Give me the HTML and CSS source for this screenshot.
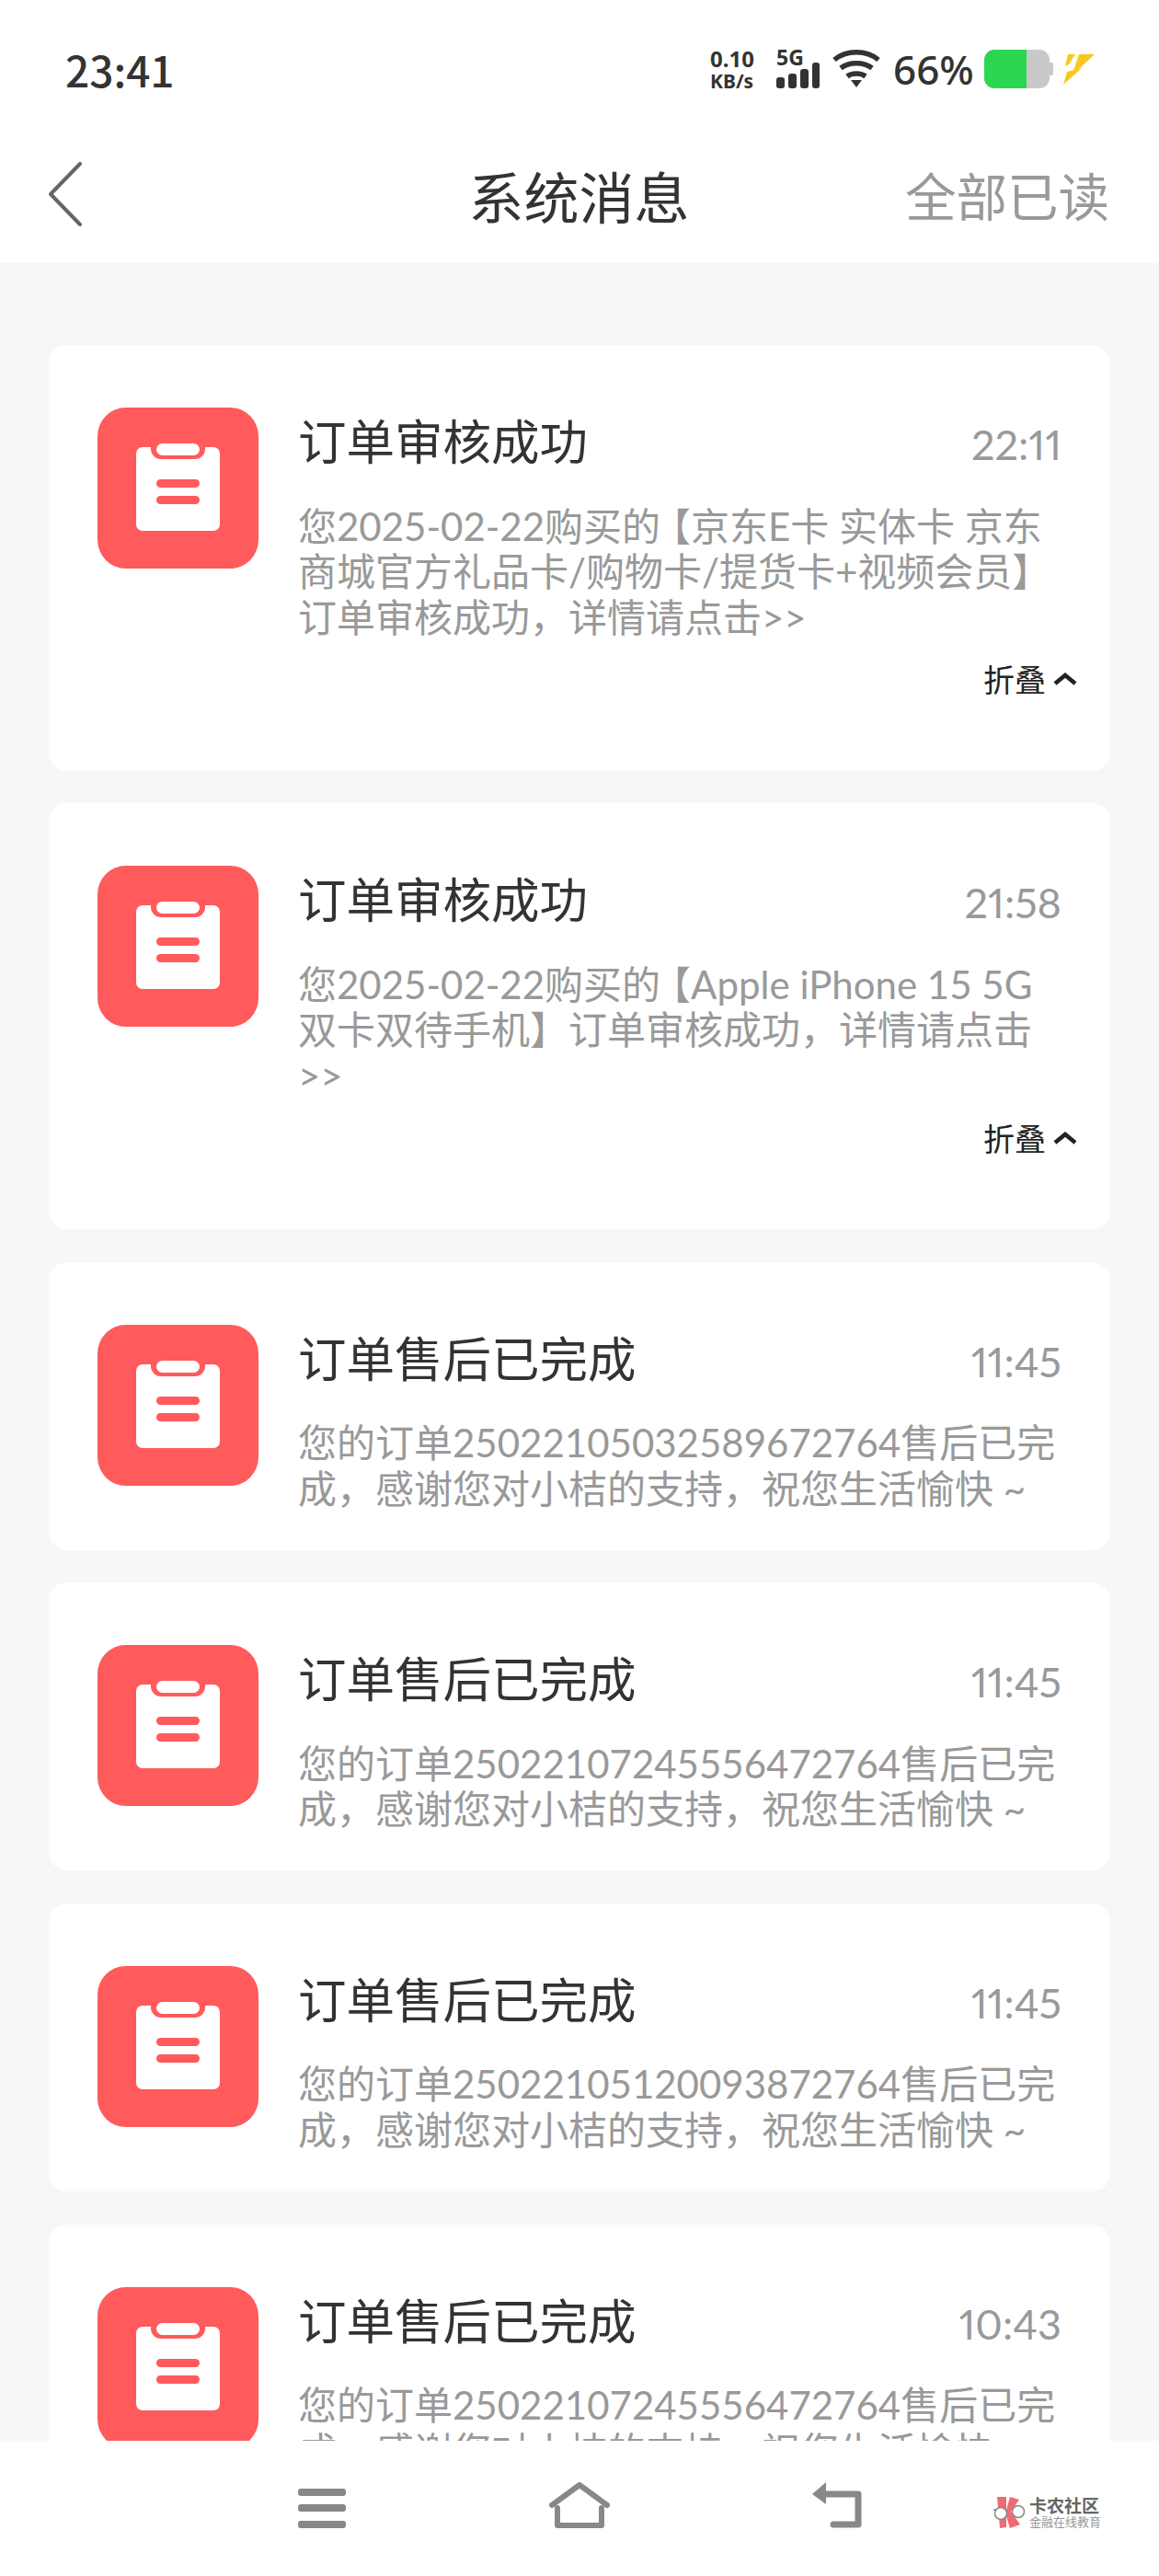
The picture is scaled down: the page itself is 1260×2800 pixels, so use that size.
FILE: index.html
```html
<!DOCTYPE html>
<html lang="zh-CN">
<head>
    <meta charset="UTF-8">
    <meta name="viewport" content="width=device-width, initial-scale=1.0">
    <title>系统消息</title>
    <link rel="stylesheet" href="styles.css">
</head>
<body>
    <svg class="defs" width="0" height="0">
        <symbol id="clipboard" viewBox="0 0 175 175">
            <rect width="175" height="175" rx="31" fill="#ff5a5c"/>
            <rect x="42" y="43" width="91" height="91" rx="7" fill="#fff"/>
            <rect x="58" y="32" width="59" height="24" rx="11" fill="#ff5a5c"/>
            <rect x="64" y="39" width="47" height="13" rx="6.5" fill="#fff"/>
            <rect x="64" y="78" width="47" height="9" rx="4.5" fill="#ff5a5c"/>
            <rect x="64" y="96" width="47" height="9" rx="4.5" fill="#ff5a5c"/>
        </symbol>
    </svg>

    <div class="page">
        <div class="status-bar">
            <div class="clock">23:41</div>
            <div class="status-icons">
                <div class="speed"><span class="speed-num">0.10</span><span class="speed-unit">KB/s</span></div>
                <div class="signal">
                    <span class="net">5G</span>
                    <svg width="47" height="28" viewBox="0 0 47 28" fill="#333">
                        <rect x="0" y="16" width="9" height="12" rx="3"/>
                        <rect x="13" y="12" width="9" height="16" rx="3"/>
                        <rect x="26" y="7" width="9" height="21" rx="3"/>
                        <rect x="39" y="0" width="8" height="28" rx="3"/>
                    </svg>
                </div>
                <svg class="wifi" width="52" height="42" viewBox="0 0 52 42" fill="none" stroke="#333" stroke-width="5.5">
                    <path d="M2 11C15 0 37 0 50 11"/>
                    <path d="M9 20C18 13 34 13 43 20"/>
                    <path d="M16 29C21 25 31 25 36 29"/>
                    <path d="M20 33H32L26 41Z" fill="#333" stroke="none"/>
                </svg>
                <div class="percent">66%</div>
                <svg class="battery" width="75" height="42" viewBox="0 0 75 42">
                    <rect x="70" y="14" width="5" height="14" rx="2" fill="#c9c9c9"/>
                    <path d="M46 0H60A11 11 0 0 1 71 11V31A11 11 0 0 1 60 42H46Z" fill="#c9c9c9"/>
                    <path d="M46 0H11A11 11 0 0 0 0 11V31A11 11 0 0 0 11 42H46Z" fill="#2dd64f"/>
                </svg>
                <svg class="bolt" width="35" height="35" viewBox="0 0 35 35" fill="#f8c91c">
                    <path d="M6 1H14L7 12L3 14Z"/>
                    <path d="M18 1H35L19 16L12 19Z"/>
                    <path d="M5 20L21 16L1 34Z"/>
                </svg>
            </div>
        </div>

        <div class="header">
            <svg class="back" width="36" height="70" viewBox="0 0 36 70" fill="none" stroke="#666" stroke-width="4" stroke-linecap="round" stroke-linejoin="round">
                <path d="M34 2L2 35L34 68"/>
            </svg>
            <div class="header-title">系统消息</div>
            <div class="read-all">全部已读</div>
        </div>

        <div class="list">
            <div class="card">
                <svg class="card-icon"><use href="#clipboard"/></svg>
                <div class="card-text">
                    <div class="card-top"><div class="card-title">订单审核成功</div><div class="card-time">22:11</div></div>
                    <div class="card-body">您2025-02-22购买的<span class="bracket">【</span>京东E卡 实体卡 京东商城官方礼品卡/购物卡/提货卡+视频会员】订单审核成功，详情请点击&gt;&gt;</div>
                    <div class="fold">折叠
                        <svg width="26" height="14" viewBox="0 0 26 14" fill="none" stroke="#222" stroke-width="4.5"><path d="M2 12L13 3L24 12"/></svg>
                    </div>
                </div>
            </div>
            <div class="card">
                <svg class="card-icon"><use href="#clipboard"/></svg>
                <div class="card-text">
                    <div class="card-top"><div class="card-title">订单审核成功</div><div class="card-time">21:58</div></div>
                    <div class="card-body">您2025-02-22购买的<span class="bracket">【</span>Apple iPhone 15 5G双卡双待手机】订单审核成功，详情请点击&gt;&gt;</div>
                    <div class="fold">折叠
                        <svg width="26" height="14" viewBox="0 0 26 14" fill="none" stroke="#222" stroke-width="4.5"><path d="M2 12L13 3L24 12"/></svg>
                    </div>
                </div>
            </div>
            <div class="card">
                <svg class="card-icon"><use href="#clipboard"/></svg>
                <div class="card-text">
                    <div class="card-top"><div class="card-title">订单售后已完成</div><div class="card-time">11:45</div></div>
                    <div class="card-body">您的订单25022105032589672764售后已完成，感谢您对小桔的支持，祝您生活愉快 ~</div>
                </div>
            </div>
            <div class="card">
                <svg class="card-icon"><use href="#clipboard"/></svg>
                <div class="card-text">
                    <div class="card-top"><div class="card-title">订单售后已完成</div><div class="card-time">11:45</div></div>
                    <div class="card-body">您的订单25022107245556472764售后已完成，感谢您对小桔的支持，祝您生活愉快 ~</div>
                </div>
            </div>
            <div class="card">
                <svg class="card-icon"><use href="#clipboard"/></svg>
                <div class="card-text">
                    <div class="card-top"><div class="card-title">订单售后已完成</div><div class="card-time">11:45</div></div>
                    <div class="card-body">您的订单25022105120093872764售后已完成，感谢您对小桔的支持，祝您生活愉快 ~</div>
                </div>
            </div>
            <div class="card">
                <svg class="card-icon"><use href="#clipboard"/></svg>
                <div class="card-text">
                    <div class="card-top"><div class="card-title">订单售后已完成</div><div class="card-time">10:43</div></div>
                    <div class="card-body">您的订单25022107245556472764售后已完成，感谢您对小桔的支持，祝您生活愉快 ~</div>
                </div>
            </div>
        </div>

        <div class="nav-bar">
            <svg width="52" height="43" viewBox="0 0 52 43" fill="#888">
                <rect y="0" width="52" height="8" rx="3"/>
                <rect y="17" width="52" height="8" rx="3"/>
                <rect y="35" width="52" height="8" rx="3"/>
            </svg>
            <svg width="66" height="50" viewBox="0 0 66 50" fill="none" stroke="#888" stroke-width="6" stroke-linecap="round" stroke-linejoin="round">
                <path d="M3 25L33 3L63 25"/>
                <path d="M9 28V47H57V28"/>
            </svg>
            <svg width="56" height="50" viewBox="0 0 56 50" fill="none" stroke="#888" stroke-width="7" stroke-linecap="round" stroke-linejoin="round">
                <path d="M12 13H51V46H24"/>
                <path d="M16 0V24L1 13Z" fill="#888" stroke="none"/>
            </svg>
            <div class="watermark">
                <svg width="37" height="35" viewBox="0 0 37 35">
                    <path d="M4 0H14V33L7 34Z" fill="#f06a75"/>
                    <path d="M18 0L28 3L19 16L29 30L18 34L13 18Z" fill="#f06a75"/>
                    <path d="M0 14H12" stroke="#888" stroke-width="1.5"/>
                    <circle cx="8" cy="18" r="6.5" fill="#fff" stroke="#888" stroke-width="1.5"/>
                    <circle cx="27" cy="16" r="6.5" fill="#fff" stroke="#888" stroke-width="1.5"/>
                </svg>
                <div class="watermark-text"><span class="wm-name">卡农社区</span><span class="wm-sub">金融在线教育</span></div>
            </div>
        </div>
    </div>
</body>
</html>
```

FILE: styles.css
```css
* {
    margin: 0;
    padding: 0;
    box-sizing: border-box;
    font-family: "Noto Sans CJK SC", "Noto Sans", sans-serif;
}

body {
    background: #f7f7f7;
}

.defs {
    display: block;
    height: 0;
}

.page {
    display: flex;
    flex-direction: column;
    height: 2800px;
    overflow: hidden;
}

.status-bar {
    display: flex;
    justify-content: space-between;
    align-items: center;
    height: 150px;
    padding: 0 70px 0 71px;
    background: white;
    color: #333;
}

.clock {
    font-size: 46px;
    font-weight: 500;
}

.status-icons {
    display: flex;
    align-items: center;
}

.speed {
    display: flex;
    flex-direction: column;
    width: 70px;
    padding-top: 2px;
    font-family: "Noto Sans", sans-serif;
    font-weight: 700;
}

.speed-num {
    font-family: inherit;
    font-size: 24px;
    line-height: 24px;
}

.speed-unit {
    font-family: inherit;
    font-size: 21px;
    line-height: 24px;
}

.signal {
    display: flex;
    flex-direction: column;
    width: 63px;
    padding-left: 2px;
}

.net {
    font-family: "Noto Sans", sans-serif;
    font-size: 23px;
    line-height: 15px;
    font-weight: 700;
    margin-bottom: -2px;
}

.percent {
    width: 113px;
    padding-left: 14px;
    font-family: "Noto Sans", sans-serif;
    font-size: 44px;
    line-height: 50px;
    font-weight: 500;
}

.bolt {
    margin-left: 10px;
}

.header {
    display: grid;
    grid-template-columns: 1fr auto 1fr;
    align-items: center;
    height: 136px;
    padding: 0 54px 14px 53px;
    background: white;
}

.header-title {
    font-size: 60px;
    color: #333;
}

.read-all {
    justify-self: end;
    font-size: 55.5px;
    color: #999;
}

.list {
    flex: 1;
    display: flex;
    flex-direction: column;
    gap: 35.5px;
    padding: 89px 53px 0;
    overflow: hidden;
}

.card {
    flex-shrink: 0;
    display: flex;
    gap: 43px;
    padding: 68px 53px 41.5px;
    background: white;
    border-radius: 20px;
}

.card-icon {
    flex-shrink: 0;
    width: 175px;
    height: 175px;
}

.card-text {
    flex: 1;
    min-width: 0;
    padding-top: 4px;
}

.card-top {
    display: flex;
    justify-content: space-between;
    align-items: center;
    height: 60px;
}

.card-title {
    font-size: 52.5px;
    color: #333;
}

.card-time {
    padding-top: 12px;
    font-family: "Lato", "Noto Sans CJK SC", sans-serif;
    font-size: 45px;
    font-variant-numeric: proportional-nums;
    color: #999;
}

.card-body {
    margin-top: 40.5px;
    font-family: "Lato", "Noto Sans CJK SC", sans-serif;
    font-size: 42px;
    line-height: 49.6px;
    color: #999;
}

.bracket {
    padding-left: 12px;
    font-feature-settings: "halt";
    line-height: 0;
}

.fold {
    display: flex;
    justify-content: flex-end;
    align-items: center;
    gap: 8px;
    margin: 20px -17px 36px 0;
    font-size: 34px;
    line-height: 44px;
    color: #222;
}

.nav-bar {
    position: relative;
    display: grid;
    grid-template-columns: repeat(3, 280px);
    justify-content: center;
    justify-items: center;
    align-items: end;
    flex-shrink: 0;
    height: 147px;
    padding: 45px 0 52px;
    background: white;
}

.watermark {
    position: absolute;
    left: 1080px;
    top: 60px;
    display: flex;
    align-items: center;
    gap: 2px;
}

.watermark-text {
    display: flex;
    flex-direction: column;
    color: #666;
}

.wm-name {
    font-size: 19px;
    line-height: 20px;
    font-weight: 700;
}

.wm-sub {
    font-size: 13px;
    line-height: 16px;
    color: #999;
}
```
